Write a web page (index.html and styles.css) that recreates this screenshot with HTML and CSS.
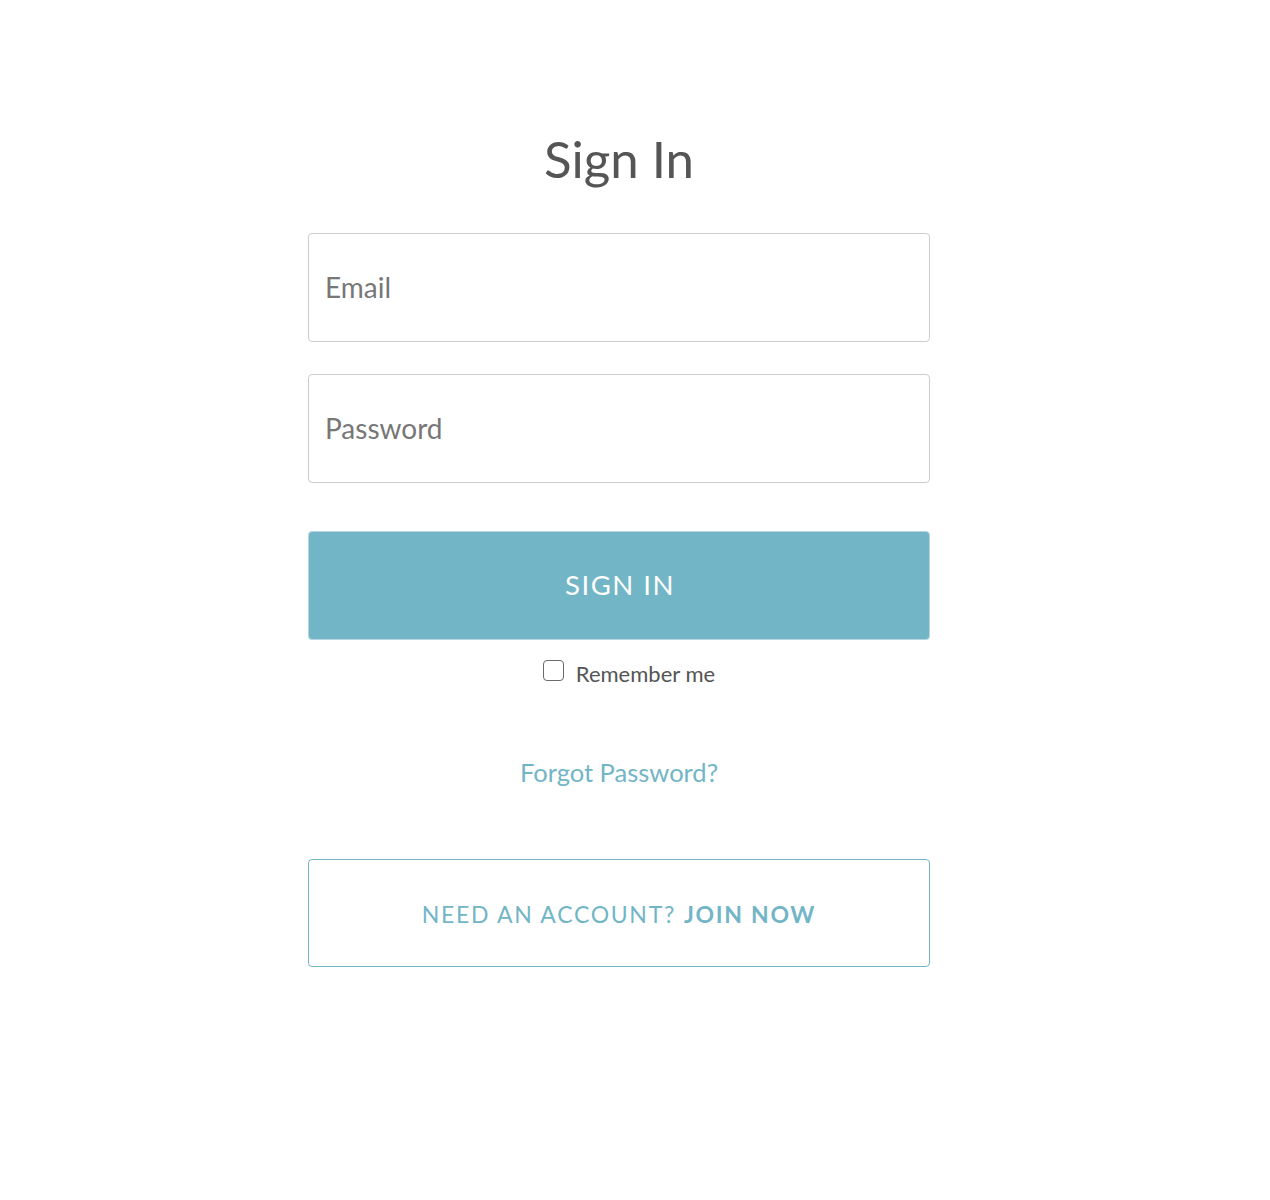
FILE: index.html
```html
<!DOCTYPE html>
<html lang="en">
<head>
<meta charset="utf-8">
<title>Sign In</title>
<link rel="stylesheet" href="styles.css">
</head>
<body>
<main class="page">
  <form class="signin">
    <h1 class="title">Sign In</h1>
    <input class="field" type="email" placeholder="Email">
    <input class="field field-pass" type="password" placeholder="Password">
    <button class="btn-primary" type="button">SIGN IN</button>
    <label class="remember"><span class="box"></span><span>Remember me</span></label>
    <a class="forgot" href="#">Forgot Password?</a>
    <a class="join" href="#">NEED AN ACCOUNT? <strong>JOIN NOW</strong></a>
  </form>
</main>
</body>
</html>
```
FILE: styles.css
```css
html, body {
  margin: 0;
  padding: 0;
  background: #ffffff;
}
body {
  font-family: "Lato", "Open Sans", "Liberation Sans", sans-serif;
  color: #555555;
}
.page {
  display: flex;
  justify-content: center;
  padding-top: 126px;
  padding-right: 32px;
}
.signin {
  width: 622px;
  display: flex;
  flex-direction: column;
  align-items: stretch;
}
.title {
  margin: 0 0 41px;
  text-align: center;
  font-weight: 400;
  font-size: 51px;
  line-height: 66px;
  color: #555555;
}
.field {
  box-sizing: border-box;
  height: 109px;
  margin: 0;
  padding: 0 16px 2px;
  border: 1px solid #cccccc;
  border-radius: 4px;
  font-family: inherit;
  font-size: 28px;
  color: #555;
  outline: none;
}
.field::placeholder {
  color: #777777;
}
.field-pass {
  margin-top: 32px;
}
.btn-primary {
  box-sizing: border-box;
  margin-top: 48px;
  height: 109px;
  padding: 0 0 2px 2px;
  border: 1px solid #b5d6df;
  border-radius: 4px;
  background: #72b5c6;
  color: #ffffff;
  font-family: inherit;
  font-size: 27.5px;
  letter-spacing: 1.5px;
  cursor: pointer;
}
.remember {
  display: flex;
  align-items: center;
  justify-content: center;
  gap: 12px;
  margin-top: 19px;
  padding-left: 20px;
  font-size: 22px;
  color: #555555;
  height: 28px;
}
.box {
  box-sizing: border-box;
  width: 21px;
  height: 21px;
  margin-bottom: 5px;
  border: 1.5px solid #6a6a6a;
  border-radius: 4px;
}
.forgot {
  margin-top: 70px;
  text-align: center;
  font-size: 25.5px;
  line-height: 30px;
  color: #72b5c6;
  text-decoration: none;
}
.join {
  box-sizing: border-box;
  margin-top: 72px;
  height: 108px;
  display: flex;
  align-items: center;
  justify-content: center;
  gap: 8px;
  padding-top: 2px;
  border: 1px solid #72b5c6;
  border-radius: 4px;
  color: #72b5c6;
  text-decoration: none;
  font-size: 23px;
  letter-spacing: 1.7px;
}
.join strong {
  font-weight: 700;
  letter-spacing: 1.7px;
}
```
